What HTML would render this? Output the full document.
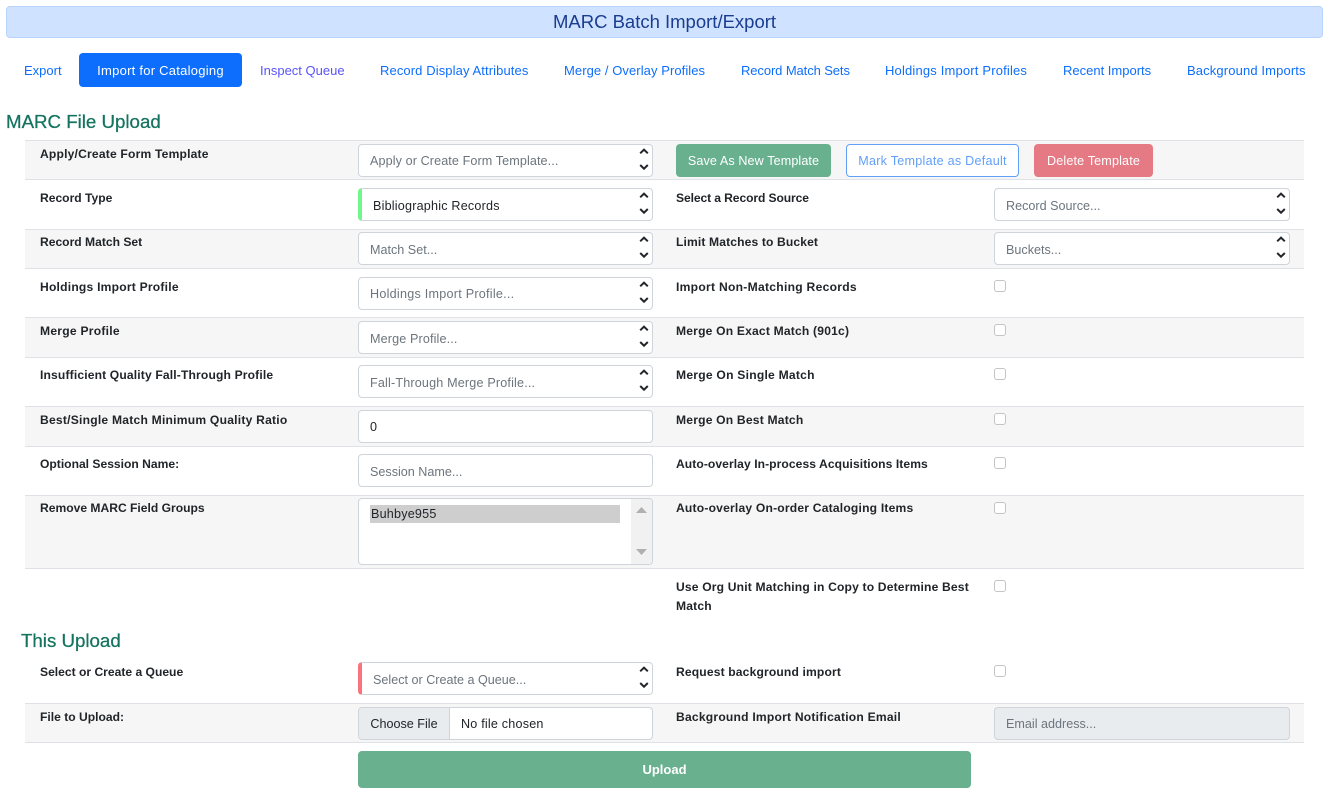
<!DOCTYPE html>
<html lang="en"><head><meta charset="utf-8"><title>MARC Batch Import/Export</title>
<style>
html,body{margin:0;padding:0;background:#fff;width:1335px;height:799px;overflow:hidden}
body{font-family:"Liberation Sans",sans-serif;font-size:13px;color:#212529;position:relative}
div,a,span,label{position:absolute;box-sizing:border-box;white-space:nowrap}
.title{left:6px;top:6px;width:1317px;height:32px;background:#cfe2ff;border:1px solid #b6d4fe;border-radius:4px;text-align:center;font-size:18.5px;line-height:30px;color:#1a3d8f}
.nav{top:53px;height:34px;line-height:36px;font-size:13px;color:#0d6efd;text-decoration:none}
.active{left:79px;width:163px;background:#0d6efd;border-radius:4px;color:#fff;text-align:center;letter-spacing:.25px}
.h{color:#14735f;font-size:18.7px;line-height:24px;-webkit-text-stroke:.25px #14735f}
.row{left:25px;width:1279px;border-bottom:1px solid #dee2e6}
.g{background:#f6f6f6}
.l{font-weight:bold;font-size:12.1px;line-height:18px;color:#212529;margin-top:1px}
.f{height:33px;background:#fff;border:1px solid #ced4da;border-radius:4px;color:#6c757d;font-size:12.6px;line-height:35px;padding-left:11px}
.t{line-height:33px}
.c1{left:358px;width:295px}.c2{left:994px;width:296px}
.f svg{position:absolute;right:2px;top:0;width:12px;height:31px}
.ck{left:994px;width:12px;height:12px;background:#fff;border:1px solid #c4c4c4;border-radius:3px}
.btn{top:144px;height:33px;border-radius:4px;text-align:center;font-size:12.6px;line-height:34px}
</style></head><body>
<svg width="0" height="0" style="position:absolute"><defs><symbol id="s" viewBox="0 0 12 31"><path d="M2.200 8.300 6 4.600l3.800 3.700M2.200 20 6 23.700 9.800 20" fill="none" stroke="#22262b" stroke-width="2"/></symbol></defs></svg>

<div class="title">MARC Batch Import/Export</div>

<a class="nav" style="left:24px">Export</a>
<a class="nav active">Import for Cataloging</a>
<a class="nav" style="left:260px;color:#5a55f5">Inspect Queue</a>
<a class="nav" style="left:380px;letter-spacing:.1px">Record Display Attributes</a>
<a class="nav" style="left:564px;letter-spacing:.07px">Merge / Overlay Profiles</a>
<a class="nav" style="left:741px;letter-spacing:-.1px">Record Match Sets</a>
<a class="nav" style="left:885px;letter-spacing:.17px">Holdings Import Profiles</a>
<a class="nav" style="left:1063px">Recent Imports</a>
<a class="nav" style="left:1187px;letter-spacing:.13px">Background Imports</a>

<div class="h" style="left:6px;top:110px">MARC File Upload</div>

<div class="row g" style="top:140px;height:40px;border-top:1px solid #dee2e6"></div>
<div class="row" style="top:180px;height:50px"></div>
<div class="row g" style="top:230px;height:39px"></div>
<div class="row" style="top:269px;height:49px"></div>
<div class="row g" style="top:318px;height:40px"></div>
<div class="row" style="top:358px;height:49px"></div>
<div class="row g" style="top:407px;height:40px"></div>
<div class="row" style="top:447px;height:49px"></div>
<div class="row g" style="top:496px;height:73px"></div>
<div class="row g" style="top:703px;height:40px;border-top:1px solid #dee2e6"></div>

<div class="l" style="left:40px;top:144px;letter-spacing:.19px">Apply/Create Form Template</div>
<div class="f c1 t" style="top:144px;letter-spacing:.1px">Apply or Create Form Template...<svg><use href="#s"/></svg></div>
<div class="btn" style="left:676px;width:155px;background:#69b08f;color:#fff;letter-spacing:.1px">Save As New Template</div>
<div class="btn" style="left:846px;width:173px;background:#fff;border:1px solid #62a0f8;color:#62a0f8;line-height:32px;letter-spacing:.25px">Mark Template as Default</div>
<div class="btn" style="left:1034px;width:119px;background:#e67a84;color:#fff;letter-spacing:.15px">Delete Template</div>

<div class="l" style="left:40px;top:188px">Record Type</div>
<div class="f c1" style="top:188px;border-left:4px solid #72f58c;color:#212529;padding-left:11px;letter-spacing:.2px">Bibliographic Records<svg><use href="#s"/></svg></div>
<div class="l" style="left:676px;top:188px;letter-spacing:-.1px">Select a Record Source</div>
<div class="f c2" style="top:188px">Record Source...<svg><use href="#s"/></svg></div>

<div class="l" style="left:40px;top:232px">Record Match Set</div>
<div class="f c1" style="top:232px">Match Set...<svg><use href="#s"/></svg></div>
<div class="l" style="left:676px;top:232px;letter-spacing:.13px">Limit Matches to Bucket</div>
<div class="f c2" style="top:232px">Buckets...<svg><use href="#s"/></svg></div>

<div class="l" style="left:40px;top:277px;letter-spacing:.22px">Holdings Import Profile</div>
<div class="f c1 t" style="top:277px;letter-spacing:.25px">Holdings Import Profile...<svg><use href="#s"/></svg></div>
<div class="l" style="left:676px;top:277px;letter-spacing:.28px">Import Non-Matching Records</div>
<div class="ck" style="top:280px"></div>

<div class="l" style="left:40px;top:321px;letter-spacing:.25px">Merge Profile</div>
<div class="f c1" style="top:321px;letter-spacing:.13px">Merge Profile...<svg><use href="#s"/></svg></div>
<div class="l" style="left:676px;top:321px;letter-spacing:.19px">Merge On Exact Match (901c)</div>
<div class="ck" style="top:324px"></div>

<div class="l" style="left:40px;top:365px;letter-spacing:.15px">Insufficient Quality Fall-Through Profile</div>
<div class="f c1" style="top:365px;letter-spacing:.17px">Fall-Through Merge Profile...<svg><use href="#s"/></svg></div>
<div class="l" style="left:676px;top:365px;letter-spacing:.24px">Merge On Single Match</div>
<div class="ck" style="top:368px"></div>

<div class="l" style="left:40px;top:410px;letter-spacing:.23px">Best/Single Match Minimum Quality Ratio</div>
<div class="f c1 t" style="top:410px;color:#212529">0</div>
<div class="l" style="left:676px;top:410px;letter-spacing:.2px">Merge On Best Match</div>
<div class="ck" style="top:413px"></div>

<div class="l" style="left:40px;top:454px">Optional Session Name:</div>
<div class="f c1" style="top:454px">Session Name...</div>
<div class="l" style="left:676px;top:454px;letter-spacing:.07px">Auto-overlay In-process Acquisitions Items</div>
<div class="ck" style="top:457px"></div>

<div class="l" style="left:40px;top:498px">Remove MARC Field Groups</div>
<div class="f c1" style="top:498px;height:67px;padding:0;overflow:hidden">
  <div style="left:11px;top:6px;width:250px;height:18px;background:#cecece;color:#212529;line-height:19px;padding-left:1px;letter-spacing:.2px">Buhbye955</div>
  <div style="right:0;top:0;width:21px;height:65px;background:#f1f1f1"></div>
  <svg style="right:5px;top:8px;width:11px;height:6px" viewBox="0 0 11 6"><path d="M5.500 0 11 6H0z" fill="#b0b0b0"/></svg>
  <svg style="right:5px;top:50px;width:11px;height:6px" viewBox="0 0 11 6"><path d="M0 0h11L5.500 6z" fill="#b0b0b0"/></svg>
</div>
<div class="l" style="left:676px;top:498px;letter-spacing:.2px">Auto-overlay On-order Cataloging Items</div>
<div class="ck" style="top:502px"></div>

<div class="l" style="left:676px;top:577px;line-height:19px;letter-spacing:.17px">Use Org Unit Matching in Copy to Determine Best<br>Match</div>
<div class="ck" style="top:580px"></div>

<div class="h" style="left:21px;top:629px">This Upload</div>

<div class="l" style="left:40px;top:662px">Select or Create a Queue</div>
<div class="f c1" style="top:662px;border-left:4px solid #f8737c;padding-left:11px">Select or Create a Queue...<svg><use href="#s"/></svg></div>
<div class="l" style="left:676px;top:662px;letter-spacing:.15px">Request background import</div>
<div class="ck" style="top:665px"></div>

<div class="l" style="left:40px;top:707px">File to Upload:</div>
<div class="f c1" style="top:707px;padding:0;overflow:hidden;color:#212529">
  <div style="left:0;top:0;width:91px;height:31px;background:#e9ecef;border-right:1px solid #ced4da;text-align:center;line-height:32px">Choose File</div>
  <div style="left:102px;top:0;line-height:32px;letter-spacing:.2px">No file chosen</div>
</div>
<div class="l" style="left:676px;top:707px;letter-spacing:.22px">Background Import Notification Email</div>
<div class="f c2 t" style="top:707px;background:#e9ecef">Email address...</div>

<div style="left:358px;top:751px;width:613px;height:37px;background:#69b08f;border-radius:4px;color:#fff;font-weight:bold;font-size:13px;text-align:center;line-height:37px">Upload</div>
</body></html>
